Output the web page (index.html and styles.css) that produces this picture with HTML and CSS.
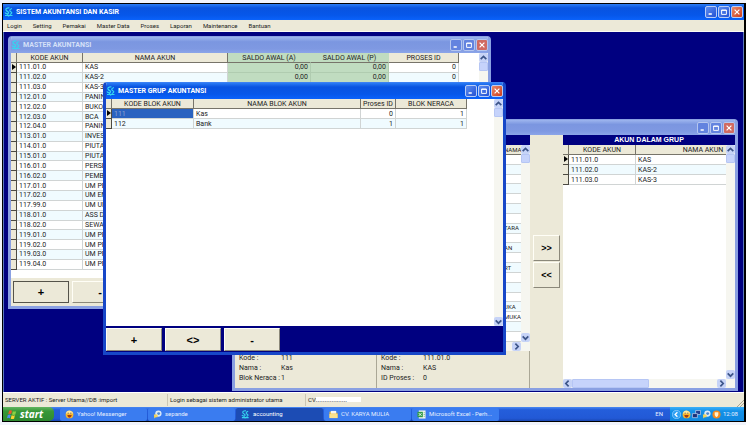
FILE: index.html
```html
<!DOCTYPE html>
<html lang="id">
<head>
<meta charset="utf-8">
<title>Sistem Akuntansi dan Kasir</title>
<link rel="stylesheet" href="styles.css">
</head>
<body>
<svg class="defs" aria-hidden="true">
  <symbol id="app" viewBox="0 0 10 10"><path d="M5.500 1C3 .5 1 2 2.300 3.500S5 4.500 4.500 6 1.500 6.500 1 5.500M8 1.500C6 2 5 3.500 6.500 4.500S8.500 6 6.500 7M1 8.500h7.500M3 7.500l1.500 1.500L7 7.500" fill="none" stroke="#35d5f0" stroke-width="1.200"/></symbol>
  <symbol id="min" viewBox="0 0 10 10"><path d="M2 7.500h4" stroke="#fff" stroke-width="2"/></symbol>
  <symbol id="max" viewBox="0 0 10 10"><path d="M2 2.500h6v5.500h-6zM2 3h6" fill="none" stroke="#fff" stroke-width="1.200"/></symbol>
  <symbol id="close" viewBox="0 0 10 10"><path d="M2 2l6 6M8 2l-6 6" stroke="#fff" stroke-width="1.500"/></symbol>
  <symbol id="up" viewBox="0 0 8 8"><path d="M1.500 5.500L4 3l2.500 2.500" fill="none" stroke="#3c5488" stroke-width="1.500"/></symbol>
  <symbol id="down" viewBox="0 0 8 8"><path d="M1.500 3L4 5.500 6.500 3" fill="none" stroke="#3c5488" stroke-width="1.500"/></symbol>
  <symbol id="left" viewBox="0 0 8 8"><path d="M5 1.500L2.500 4 5 6.500" fill="none" stroke="#3c5488" stroke-width="1.500"/></symbol>
  <symbol id="right" viewBox="0 0 8 8"><path d="M3 1.500L5.500 4 3 6.500" fill="none" stroke="#3c5488" stroke-width="1.500"/></symbol>
  <symbol id="flag" viewBox="0 0 12 12"><path d="M2.500 1.500q2-1 3.500 0l-1 4q-2-1-3.500 0z" fill="#f0562c"/><path d="M7 2q2 1 4 0l-1 4q-2 1-4 0z" fill="#8bd144"/><path d="M1 6.500q2-1 3.500 0l-1 4q-2-1-3.500 0z" fill="#4d8df5"/><path d="M5.500 7q2 1 4 0l-1 4q-2 1-4 0z" fill="#fcd22e"/></symbol>
  <symbol id="smile" viewBox="0 0 10 10"><circle cx="5" cy="5" r="4.300" fill="#f8b72c"/><path d="M1 4Q2 0 6 .8 9 2 9 4z" fill="#fde9a0"/><path d="M2.500 5.500h5Q7 8.500 5 8.500T2.500 5.500z" fill="#a33d12"/><path d="M3 3.500h1M6 3.500h1" stroke="#532" /></symbol>
  <symbol id="chat" viewBox="0 0 10 10"><circle cx="6" cy="4" r="3.500" fill="#dceaf8"/><circle cx="6.300" cy="4" r="1.600" fill="#4c88cf"/><path d="M1 5h4v3H3L1.500 9.500z" fill="#f6d457"/></symbol>
  <symbol id="folder" viewBox="0 0 10 10"><path d="M.5 2h3l1 1h5v6h-9z" fill="#e9b93e"/><path d="M2 1h6v3H2z" fill="#f7f7ee"/><path d="M.5 4.500h9V9h-9z" fill="#fbe28d"/></symbol>
  <symbol id="excel" viewBox="0 0 10 10"><path d="M2 .5h7.500v9H2z" fill="#eef6ea"/><path d="M.5 2h6v6h-6z" fill="#2f9b47"/><path d="M2 3.500l3 3M5 3.500l-3 3" stroke="#fff"/><path d="M7.500 3h1M7.500 5h1M7.500 7h1" stroke="#5aa866"/></symbol>
  <symbol id="back" viewBox="0 0 10 10"><circle cx="5" cy="5" r="4.500" fill="#2ea1f4" stroke="#9ad4ff" stroke-width=".8"/><path d="M6 2.500L3.500 5 6 7.500" fill="none" stroke="#fff" stroke-width="1.500"/></symbol>
  <symbol id="net" viewBox="0 0 10 10"><path d="M4 .5h5.500v4.500H4z" fill="#203f93" stroke="#bcd0ee" stroke-width=".8"/><path d="M.5 4h5.500v4.500H.5z" fill="#1b2f78" stroke="#bcd0ee" stroke-width=".8"/></symbol>
  <symbol id="shield" viewBox="0 0 10 10"><circle cx="5" cy="5" r="4.500" fill="#f28b20"/><path d="M3 2.500h4v3Q6.500 7 5 8 3.500 7 3 5.500z" fill="#fff2cf"/></symbol>
</svg>
<div class="screen">
  <header class="titlebar main-title">
    <svg class="ico"><use href="#app"/></svg><h1>SISTEM AKUNTANSI DAN KASIR</h1>
    <div class="winbtns"><button aria-label="Minimize"><svg><use href="#min"/></svg></button><button aria-label="Maximize"><svg><use href="#max"/></svg></button><button class="x" aria-label="Close"><svg><use href="#close"/></svg></button></div>
  </header>
  <nav class="menu"><button>Login</button><button>Setting</button><button>Pemakai</button><button>Master Data</button><button>Proses</button><button>Laporan</button><button>Maintenance</button><button>Bantuan</button></nav>

  <main class="desktop">
    <section class="window inactive win-group">
      <div class="titlebar"><div class="winbtns"><button aria-label="Minimize"><svg><use href="#min"/></svg></button><button aria-label="Maximize"><svg><use href="#max"/></svg></button><button class="x" aria-label="Close"><svg><use href="#close"/></svg></button></div></div>
      <div class="group-body">
        <div class="pane">
          <div class="caption"></div>
          <div class="gridbox source-box">
            <div class="view">
              <table class="source">
                <thead><tr><th>NAMA</th></tr></thead>
                <tbody><tr><td></td></tr><tr><td></td></tr><tr><td></td></tr><tr><td></td></tr><tr><td></td></tr><tr><td></td></tr><tr><td></td></tr><tr><td>TARA</td></tr><tr><td></td></tr><tr><td>AN</td></tr><tr><td></td></tr><tr><td>RT</td></tr><tr><td></td></tr><tr><td></td></tr><tr><td></td></tr><tr><td>UKA</td></tr><tr><td>MUKA</td></tr><tr><td></td></tr><tr><td></td></tr></tbody>
              </table>
            </div>
            <div class="vscroll"><button aria-label="Scroll up"><svg><use href="#up"/></svg></button><i class="thumb"></i><button class="end" aria-label="Scroll down"><svg><use href="#down"/></svg></button></div>
            <div class="hscroll"><button class="end" aria-label="Scroll right"><svg><use href="#right"/></svg></button></div>
          </div>
          <div class="details">
            <dl><dt>Kode :</dt><dd>111</dd><dt>Nama :</dt><dd>Kas</dd><dt>Blok Neraca :</dt><dd>1</dd></dl>
            <dl><dt>Kode :</dt><dd>111.01.0</dd><dt>Nama :</dt><dd>KAS</dd><dt>ID Proses :</dt><dd>0</dd></dl>
          </div>
        </div>
        <div class="mover"><button class="btn">&gt;&gt;</button><button class="btn">&lt;&lt;</button></div>
        <div class="pane">
          <h2 class="caption">AKUN DALAM GRUP</h2>
          <div class="gridbox">
            <div class="view">
              <table class="members">
                <colgroup><col class="c-ind"><col class="c-mkode"><col class="c-mnama"></colgroup>
                <thead><tr><th></th><th>KODE AKUN</th><th>NAMA AKUN</th></tr></thead>
                <tbody>
                  <tr><td class="cur"></td><td>111.01.0</td><td>KAS</td></tr>
                  <tr><td></td><td>111.02.0</td><td>KAS-2</td></tr>
                  <tr><td></td><td>111.03.0</td><td>KAS-3</td></tr>
                </tbody>
              </table>
            </div>
            <div class="vscroll"><button aria-label="Scroll up"><svg><use href="#up"/></svg></button><i class="thumb"></i><button class="end" aria-label="Scroll down"><svg><use href="#down"/></svg></button></div>
            <div class="hscroll"><button aria-label="Scroll left"><svg><use href="#left"/></svg></button><i class="thumb"></i><button class="end" aria-label="Scroll right"><svg><use href="#right"/></svg></button></div>
          </div>
        </div>
      </div>
    </section>

    <section class="window inactive win-akun">
      <div class="titlebar"><svg class="ico"><use href="#app"/></svg><h2>MASTER AKUNTANSI</h2><div class="winbtns"><button aria-label="Minimize"><svg><use href="#min"/></svg></button><button aria-label="Maximize"><svg><use href="#max"/></svg></button><button class="x" aria-label="Close"><svg><use href="#close"/></svg></button></div></div>
      <div class="gridbox">
        <div class="view">
          <table class="accounts">
            <colgroup><col class="c-ind"><col class="c-kode"><col class="c-nama"><col class="c-saldo-a"><col class="c-saldo-p"><col class="c-pid"></colgroup>
            <thead><tr><th></th><th>KODE AKUN</th><th>NAMA AKUN</th><th class="green">SALDO AWAL (A)</th><th class="green">SALDO AWAL (P)</th><th>PROSES ID</th></tr></thead>
            <tbody>
              <tr><td class="cur"></td><td>111.01.0</td><td>KAS</td><td>0,00</td><td>0,00</td><td>0</td></tr>
              <tr><td></td><td>111.02.0</td><td>KAS-2</td><td>0,00</td><td>0,00</td><td>0</td></tr>
              <tr><td></td><td>111.03.0</td><td>KAS-3</td><td></td><td></td><td></td></tr>
              <tr><td></td><td>112.01.0</td><td>PANIN</td><td></td><td></td><td></td></tr>
              <tr><td></td><td>112.02.0</td><td>BUKOPIN</td><td></td><td></td><td></td></tr>
              <tr><td></td><td>112.03.0</td><td>BCA</td><td></td><td></td><td></td></tr>
              <tr><td></td><td>112.04.0</td><td>PANIN</td><td></td><td></td><td></td></tr>
              <tr><td></td><td>113.01.0</td><td>INVESTASI</td><td></td><td></td><td></td></tr>
              <tr><td></td><td>114.01.0</td><td>PIUTANG</td><td></td><td></td><td></td></tr>
              <tr><td></td><td>115.01.0</td><td>PIUTANG</td><td></td><td></td><td></td></tr>
              <tr><td></td><td>116.01.0</td><td>PERSEDIAAN</td><td></td><td></td><td></td></tr>
              <tr><td></td><td>116.02.0</td><td>PEMBELIAN</td><td></td><td></td><td></td></tr>
              <tr><td></td><td>117.01.0</td><td>UM PE</td><td></td><td></td><td></td></tr>
              <tr><td></td><td>117.02.0</td><td>UM EM</td><td></td><td></td><td></td></tr>
              <tr><td></td><td>117.99.0</td><td>UM UM</td><td></td><td></td><td></td></tr>
              <tr><td></td><td>118.01.0</td><td>ASS DI</td><td></td><td></td><td></td></tr>
              <tr><td></td><td>118.02.0</td><td>SEWA</td><td></td><td></td><td></td></tr>
              <tr><td></td><td>119.01.0</td><td>UM PR</td><td></td><td></td><td></td></tr>
              <tr><td></td><td>119.02.0</td><td>UM PR</td><td></td><td></td><td></td></tr>
              <tr><td></td><td>119.03.0</td><td>UM PR</td><td></td><td></td><td></td></tr>
              <tr><td></td><td>119.04.0</td><td>UM PR</td><td></td><td></td><td></td></tr>
            </tbody>
          </table>
        </div>
        <div class="vscroll"><button aria-label="Scroll up"><svg><use href="#up"/></svg></button><i class="thumb"></i><button class="end" aria-label="Scroll down"><svg><use href="#down"/></svg></button></div>
      </div>
      <div class="actions"><button class="btn focus">+</button><button class="btn">-</button></div>
    </section>

    <section class="window win-grup">
      <div class="titlebar"><svg class="ico"><use href="#app"/></svg><h2>MASTER GRUP AKUNTANSI</h2><div class="winbtns"><button aria-label="Minimize"><svg><use href="#min"/></svg></button><button aria-label="Maximize"><svg><use href="#max"/></svg></button><button class="x" aria-label="Close"><svg><use href="#close"/></svg></button></div></div>
      <div class="gridbox">
        <div class="view">
          <table class="blocks">
            <colgroup><col class="c-ind"><col class="c-bkode"><col class="c-bnama"><col class="c-bpid"><col class="c-bner"></colgroup>
            <thead><tr><th></th><th>KODE BLOK AKUN</th><th>NAMA BLOK AKUN</th><th>Proses ID</th><th>BLOK NERACA</th></tr></thead>
            <tbody>
              <tr><td class="cur"></td><td class="sel">111</td><td>Kas</td><td>0</td><td>1</td></tr>
              <tr><td></td><td>112</td><td>Bank</td><td>1</td><td>1</td></tr>
            </tbody>
          </table>
        </div>
        <div class="vscroll"><button aria-label="Scroll up"><svg><use href="#up"/></svg></button><i class="thumb"></i><button class="end" aria-label="Scroll down"><svg><use href="#down"/></svg></button></div>
      </div>
      <div class="actions navy"><button class="btn">+</button><button class="btn">&lt;&gt;</button><button class="btn">-</button></div>
    </section>
  </main>

  <footer class="status"><span>SERVER AKTIF : Server Utama//DB :import</span><span>Login sebagai sistem administrator utama</span><span>CV<b class="masked">..................</b></span>
    <svg class="grip" viewBox="0 0 8 8"><path d="M1 8l7-7M4 8l4-4" stroke="#aaa48e"/></svg>
  </footer>
  <div class="taskbar">
    <button class="start"><svg><use href="#flag"/></svg>start</button>
    <div class="tasks">
      <button><svg><use href="#smile"/></svg>Yahoo! Messenger</button>
      <button><svg><use href="#chat"/></svg>sepande</button>
      <button class="on"><svg><use href="#app"/></svg>accounting</button>
      <button><svg><use href="#folder"/></svg>CV. KARYA MULIA</button>
      <button><svg><use href="#excel"/></svg>Microsoft Excel - Perh...</button>
    </div>
    <span class="lang">EN</span>
    <div class="tray"><svg><use href="#back"/></svg><svg><use href="#smile"/></svg><svg><use href="#net"/></svg><svg><use href="#chat"/></svg><svg><use href="#shield"/></svg><time>12:08</time></div>
  </div>
</div>
</body>
</html>
```
FILE: styles.css
```css
:root {
  --face: #ece9d8;
  --navy: #000080;
  --grid: Roboto, "Liberation Sans", sans-serif;
  --ui: Roboto, "Noto Sans", sans-serif;
}
* { box-sizing: border-box; }
body { margin: 0; height: 100vh; padding: 3px 0 3px 2px; background: #f1f4fc; font: 7px/8px var(--grid); color: #222; overflow: hidden; }
button { font: inherit; color: inherit; padding: 0; margin: 0; border: 0; background: none; }
h1, h2, dl, dd { margin: 0; }
svg { display: block; flex: none; }
.defs { display: none; }

.screen { height: 100%; border: 1px solid #000; border-right-width: 2px; display: flex; flex-direction: column; background: var(--face); }

/* title bars */
.titlebar { flex: none; display: flex; align-items: center; gap: 2px; height: 15px; padding: 0; background: linear-gradient(#2a7cf5, #0853e0 25%, #0657ea 70%, #0a62fb); color: #fff; }
.titlebar h1, .titlebar h2 { font: bold 7px/10px var(--grid); }
.ico { width: 10px; height: 10px; }
.winbtns { display: flex; gap: 1px; margin-left: auto; }
.winbtns button { width: 12px; height: 12px; padding: 1px; border: 1px solid #b8ccf6; border-radius: 2px; background: linear-gradient(135deg, #5c8df0, #2452d4); }
.winbtns svg { width: 8px; height: 8px; }
.winbtns .x { background: linear-gradient(135deg, #e88a6c, #cc3d1c); }
.main-title { height: 16px; padding: 0 1px; }

.menu { flex: none; display: flex; gap: 11px; height: 12px; padding: 0 4px; font: 6px/10px var(--ui); border-bottom: 1px solid #fbfaf4; }

.desktop { flex: 1; position: relative; overflow: hidden; background: var(--navy); border: solid #5a78bc; border-width: 0 1px; }

/* child windows */
.window { position: absolute; display: flex; flex-direction: column; border: 3px solid #1747c8; border-top: 1px solid #3a80f4; border-radius: 4px 4px 0 0; background: var(--face); overflow: hidden; }
.window.inactive { border-color: #8aa0e2; }
.inactive .titlebar { background: linear-gradient(#9db5ee, #7b96e0 30%, #7f99e2 75%, #8ba5e8); color: #d5e0f8; }
.inactive .winbtns button { border-color: #b5c6ef; background: #6383df; }
.inactive .winbtns .x { background: #d06a62; }
.win-akun { left: 4px; top: 4px; width: 483px; height: 273px; }
.win-grup { left: 99px; top: 50px; width: 403px; height: 273px; }
.win-group { left: 228px; top: 87px; width: 506px; height: 272px; }
.win-akun .titlebar, .win-grup .titlebar { height: 16px; }

/* data grids */
.gridbox { flex: 1; min-height: 0; display: grid; grid-template-columns: minmax(0, 1fr) 9px; grid-template-rows: minmax(0, 1fr) auto; background: #fff; }
.view { overflow: hidden; }
table { border-collapse: separate; border-spacing: 0; table-layout: fixed; }
th { height: 10px; padding: 0; font-weight: normal; white-space: nowrap; overflow: hidden; background: var(--face); border: solid #77746a; border-width: 0 1px 1px 0; }
td { height: 10px; padding: 0 2px; line-height: 8px; white-space: nowrap; overflow: hidden; border: solid #d0d4d4; border-width: 0 1px 1px 0; }
tbody tr:nth-child(even) td { background: #f0fbff; }
tbody tr td:first-child:empty { background: var(--face); border-color: #4c4a42; }
th.green { background: #c0dcc0; border-right-color: #c0dcc0; }
.cur { position: relative; }
.cur::after { content: ""; position: absolute; left: 1px; top: 1px; border: solid transparent; border-width: 3px 0 3px 4px; border-left-color: #000; }
.blocks .sel { background: #2a62c0; color: #8fa3cf; }
.c-ind { width: 6px; }

.accounts { width: 448px; height: 217px; }
.accounts td, .source td { height: 9px; }
.c-kode { width: 66px; }
.c-nama { width: 145px; }
.c-saldo-a { width: 83px; }
.c-saldo-p { width: 78px; }
.accounts td:nth-child(n+4) { text-align: right; }
.accounts tbody td:nth-child(4), .accounts tbody td:nth-child(5) { background: #c0dcc0; border-color: #b0ccb0; }

.blocks { width: 361px; }
.c-bkode { width: 82px; }
.c-bnama { width: 167px; }
.c-bpid { width: 35px; }
.blocks td:nth-child(n+4) { text-align: right; }

.members { width: 208px; }
.c-mkode { width: 67px; }
.source { width: 100%; height: 197px; font-size: 6px; }
.source th, .source td { padding: 0 0 0 269px; border-right: 0; text-align: left; }
.source tbody tr td:first-child:empty { background: #fff; border-color: #d0d4d4; }
.source tbody tr:nth-child(even) td:first-child { background: #f0fbff; }

/* scroll bars */
.vscroll { display: flex; flex-direction: column; background: #f6f6f0; }
.hscroll { grid-column: 1 / -1; display: flex; height: 9px; padding-right: 9px; background: #f6f6f0; }
.vscroll button, .hscroll button { width: 9px; height: 9px; border-radius: 2px; background: #c6d3f7; }
.vscroll svg, .hscroll svg { width: 9px; height: 9px; }
.vscroll .end { margin-top: auto; }
.hscroll .end { margin-left: auto; }
.thumb { background: #c6d3fb; border: 1px solid #b6c6f4; border-radius: 1px; }
.vscroll .thumb { height: 9px; }
.hscroll .thumb { width: 47%; }

/* buttons */
.btn { background: var(--face); border: 1px solid; border-color: #fffef6 #8b887a #8b887a #fffef6; font: bold 11px/12px "Liberation Sans", sans-serif; color: #000; }
.actions { flex: none; display: flex; gap: 3px; padding: 3px 2px; height: 28px; }
.actions .btn { width: 56px; }
.focus { border-color: #55534a; }
.actions.navy { background: var(--navy); height: 26px; padding: 2px 0 1px; }

/* group window */
.group-body { flex: 1; min-height: 0; display: grid; grid-template-columns: 295px 33px minmax(0, 1fr); }
.pane { display: flex; flex-direction: column; min-width: 0; min-height: 0; }
.caption { flex: none; height: 10px; background: var(--navy); color: #fff; font: bold 7px/10px "Liberation Sans", sans-serif; text-align: center; }
.source-box { flex: none; height: 206px; }
.details { flex: 1; display: grid; grid-template-columns: 142px 1fr; border-right: 1px solid #aaa796; }
.details dl { display: grid; grid-template-columns: 41px 1fr; grid-auto-rows: 10px; column-gap: 1px; padding: 0 4px 4px; align-content: end; white-space: nowrap; }
.details dl:first-child { border-right: 1px solid #aaa796; }
.mover { display: flex; flex-direction: column; justify-content: center; gap: 1px; padding: 0 3px; }
.mover .btn { height: 26px; font-size: 9px; }

/* status bar and taskbar */
.status { flex: none; display: flex; align-items: center; height: 15px; font: 6px/12px var(--ui); border-top: 1px solid #fff; }
.status span { border-right: 1px solid #cbc7b4; padding-left: 2px; white-space: nowrap; }
.status span:nth-child(1) { width: 165px; }
.status span:nth-child(2) { width: 138px; }
.status span:nth-child(3) { flex: 1; border: 0; }
.masked { display: inline-block; height: 5px; line-height: 5px; padding-right: 14px; background: #fff; color: #555; }
.grip { width: 8px; height: 8px; align-self: flex-end; }

.taskbar { flex: none; display: flex; align-items: center; height: 14px; background: linear-gradient(#4a8af2, #245edb 20%, #2259d6 80%, #1a48b4); color: #e6efff; font: 6px/10px var(--ui); }
.start { display: flex; align-items: center; gap: 3px; width: 51px; height: 14px; padding-left: 4px; border-radius: 0 5px 5px 0; background: linear-gradient(#62b562, #389838 30%, #2f8a30); font: italic bold 10px/12px "Open Sans", sans-serif; color: #fff; }
.start svg { width: 10px; height: 11px; }
.tasks { flex: 1; display: flex; gap: 1px; padding-left: 6px; }
.tasks button { display: flex; align-items: center; gap: 3px; width: 87px; height: 13px; padding-left: 5px; border-radius: 2px; background: #3a7cf0; white-space: nowrap; }
.tasks .on { background: #1c4cb4; color: #fff; }
.tasks svg { width: 9px; height: 9px; }
.lang { padding-right: 7px; }
.tray { display: flex; align-items: center; gap: 1px; width: 74px; height: 14px; padding-left: 2px; background: linear-gradient(#3cb0f8, #1290e8 30%, #1088e0); }
.tray svg { width: 9px; height: 9px; }
.tray time { padding-left: 1px; }
```
